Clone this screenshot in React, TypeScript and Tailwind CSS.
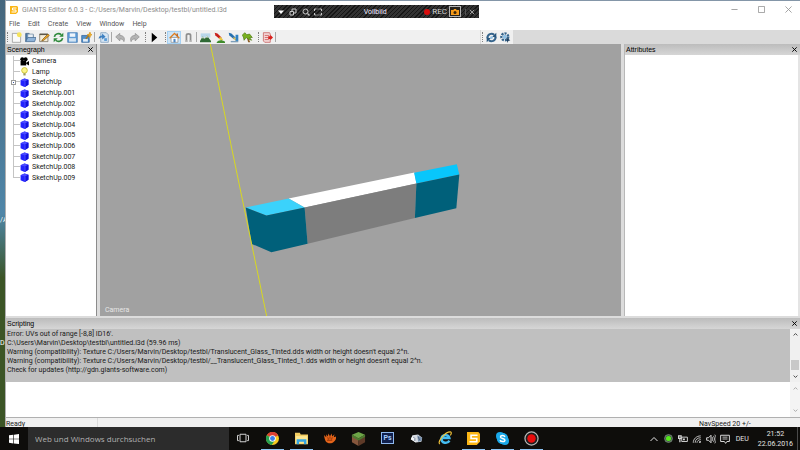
import { ReactNode } from "react";
import clsx from "clsx";

const MENUS = ["File", "Edit", "Create", "View", "Window", "Help"];

const NODES = [
  "Camera",
  "Lamp",
  "SketchUp",
  "SketchUp.001",
  "SketchUp.002",
  "SketchUp.003",
  "SketchUp.004",
  "SketchUp.005",
  "SketchUp.006",
  "SketchUp.007",
  "SketchUp.008",
  "SketchUp.009",
];

const LOG = [
  "Error: UVs out of range [-8,8] ID16'.",
  "C:\\Users\\Marvin\\Desktop\\testbl\\untitled.i3d (59.96 ms)",
  "Warning (compatibility): Texture C:/Users/Marvin/Desktop/testbl/Translucent_Glass_Tinted.dds width or height doesn't equal 2^n.",
  "Warning (compatibility): Texture C:/Users/Marvin/Desktop/testbl/__Translucent_Glass_Tinted_1.dds width or height doesn't equal 2^n.",
  "Check for updates (http://gdn.giants-software.com)",
];

type IconProps = { children: ReactNode; className?: string };

function Icon({ children, className = "size-[11px]" }: IconProps) {
  return (
    <svg viewBox="0 0 16 16" fill="none" className={clsx("shrink-0", className)}>
      {children}
    </svg>
  );
}

function GiantsIcon({ className }: { className?: string }) {
  return (
    <Icon className={className}>
      <path d="M0 0h14l2 2v10l-4 4H0z" fill="#fbb615" />
      <path d="M13 4H5v4h7v4H3" stroke="#fff" strokeWidth="2" />
    </Icon>
  );
}

const newIcon = (
  <Icon>
    <path d="M2 2h9l3 3v10H2z" fill="#fafafa" stroke="#8c8c8c" />
    <circle cx="12" cy="4" r="3.500" fill="#f6e35a" />
  </Icon>
);

const openIcon = (
  <Icon>
    <path d="M1 14V2h5l1 2h5v4" fill="#4d7ba8" stroke="#37597c" />
    <path d="M4 3h8v6H4z" fill="#e8eef4" stroke="#7890a8" />
    <path d="M1 14l3-6h12l-2 6z" fill="#8fb4da" stroke="#3f658c" />
  </Icon>
);

const editIcon = (
  <Icon>
    <path d="M1 3h12v11H1z" fill="#f5edd8" stroke="#6a6250" />
    <path d="M1 2.500h12v2H1z" fill="#5c5648" />
    <path d="M5 11l8-8 2 2-8 7-3 1z" fill="#f0a928" stroke="#7c5516" />
  </Icon>
);

const reloadIcon = (
  <Icon>
    <path d="M2 7c1-5 7-6 10-3M14 9c-1 5-7 6-10 3" stroke="#2f8a3c" strokeWidth="2.500" />
    <path d="M9 7h6V1zM7 9H1v6z" fill="#2f8a3c" />
  </Icon>
);

const saveIcon = (
  <Icon>
    <path d="M1 1h14v14H1z" fill="#5f9cd6" stroke="#3f78b2" />
    <path d="M4 2h8v5H4z" fill="#eef4fa" />
    <path d="M3 9h10v5H3z" fill="#d5e5f3" />
  </Icon>
);

const saveAsIcon = (
  <Icon>
    <path d="M1 5h11v10H1z" fill="#4f8fcc" stroke="#2f5f95" />
    <path d="M3 10h7v4H3z" fill="#e3edf7" />
    <path d="M7 10l6-7" stroke="#b27a18" strokeWidth="2" />
    <path d="M13 0l1 3 2 1-2 1-1 3-1-3-3-1 3-1z" fill="#f2b531" stroke="#d8961c" />
  </Icon>
);

const importIcon = (
  <Icon>
    <path d="M4 1h8l3 3v11H4z" fill="#d6e6f4" stroke="#6f93b5" />
    <path d="M1 10c0-4 2-5 5-5V2l5 5-5 4V8c-2 0-3 1-5 2z" fill="#3c7fc0" />
    <path d="M9 9h4v4H9z" fill="#5a9bd6" />
  </Icon>
);

const undoIcon = (
  <Icon>
    <path d="M1 7l6-5v3c5 0 8 3 6 9-1-3-3-4-6-4v3z" fill="#b4b4b4" stroke="#8f8f8f" />
  </Icon>
);

const redoIcon = (
  <Icon>
    <path d="M15 7L9 2v3C4 5 1 8 3 14c1-3 3-4 6-4v3z" fill="#b4b4b4" stroke="#8f8f8f" />
  </Icon>
);

const playIcon = (
  <Icon>
    <path d="M4 1l8 7-8 7z" fill="#000" />
  </Icon>
);

const homeIcon = (
  <Icon>
    <path d="M3 8h10v7H3z" fill="#fff" stroke="#8a8a8a" />
    <path d="M1 9l7-7 7 7" stroke="#e07b1c" strokeWidth="2" />
    <path d="M11 2h2v4h-2z" fill="#b5642a" />
    <path d="M6.500 10h3v5h-3z" fill="#4d86c4" />
  </Icon>
);

const magnetIcon = (
  <Icon>
    <path d="M5 14V5c0-3 6-3 6 0v9" stroke="#8e8e8e" strokeWidth="2.500" />
    <path d="M3.500 12h3v2.500h-3zM9.500 12h3v2.500h-3z" fill="#b8b8b8" />
  </Icon>
);

const terrainIcon = (
  <Icon>
    <path d="M1 2h14v6H1z" fill="#b9d7ea" />
    <path d="M0 13l4-7 3 4 3-5 6 8v2H0z" fill="#2f6a35" />
    <path d="M4 6l2 3H3zM10 5l2 3H8z" fill="#f4f8f4" />
  </Icon>
);

const paintIcon = (
  <Icon>
    <path d="M1 1l4 1 6 6-2 3-7-6z" fill="#c8201c" />
    <path d="M8 8l4 4" stroke="#e8c63c" strokeWidth="3" />
    <path d="M4 15c2-4 8-4 12-1v2H4z" fill="#3f8c2c" />
  </Icon>
);

const pickIcon = (
  <Icon>
    <path d="M1 1l4 1 6 6-2 3-7-6z" fill="#2670ae" />
    <path d="M8 8l4 4" stroke="#e6c040" strokeWidth="2" />
    <path d="M11 4h4v9h-4z" fill="#2e82c4" />
    <path d="M4 13h11v2H4z" fill="#7c9db8" />
  </Icon>
);

const foliageIcon = (
  <Icon>
    <path d="M7 8h2l3 7H9z" fill="#8a5c22" />
    <path d="M0 5l4-4 3 3 4-1 4 5-4 0 3 4-5-2-3-2-3 4-1-5z" fill="#78b01e" stroke="#4c7a12" />
  </Icon>
);

const scriptIcon = (
  <Icon>
    <path d="M2 1h9l1 2v12H4L2 13z" fill="#f3d6d6" stroke="#c25050" />
    <path d="M4 5h6M4 8h5M4 11h6" stroke="#c94646" />
    <path d="M9 6h3V4l4 4-4 4v-2H9z" fill="#d8201c" />
  </Icon>
);

const syncIcon = (
  <Icon>
    <path d="M2 9c0-6 6-8 10-5M14 7c0 6-6 8-10 5" stroke="#35648c" strokeWidth="3" />
    <path d="M9 7l6 1V1zM7 9l-6-1v7z" fill="#27567e" />
    <circle cx="8" cy="8" r="2" fill="#8fc0e4" />
  </Icon>
);

const gearIcon = (
  <Icon>
    <circle cx="7" cy="7" r="5" stroke="#35648c" strokeWidth="3.500" strokeDasharray="3 1.500" />
    <circle cx="7" cy="7" r="3" fill="#8fc0e4" />
    <path d="M9 8l6 4-3 1-1 3z" fill="#1b3c5c" />
  </Icon>
);

function ToolButton({ label, active, children }: { label: string; active?: boolean; children: ReactNode }) {
  return (
    <button
      type="button"
      aria-label={label}
      className={clsx(
        "flex h-[13px] w-[14px] items-center justify-center",
        active && "bg-[#cce4f7] outline outline-[#a5d0f2] -outline-offset-1"
      )}
    >
      {children}
    </button>
  );
}

function Separator() {
  return <span className="mx-px h-[10px] w-px bg-[#a8a8a8]" />;
}

function ToolGroup({ children }: { children: ReactNode }) {
  return (
    <div className="flex items-center">
      <span className="ml-px h-[10px] w-[2px] border-l border-dotted border-[#808080]" />
      {children}
    </div>
  );
}

function PanelHeader({ title }: { title: string }) {
  return (
    <div className="flex h-[11px] shrink-0 items-center justify-between bg-linear-to-b from-[#bcbcbc] to-[#d6d6d6] pr-[3px] pl-px font-['Liberation_Sans',sans-serif] text-[7px] leading-[11px] text-black">
      <h2>{title}</h2>
      <button type="button" aria-label={`Close ${title}`}>
        <Icon className="size-[5px]">
          <path d="M1 1l14 14M15 1L1 15" stroke="#000" strokeWidth="3" />
        </Icon>
      </button>
    </div>
  );
}

function NodeIcon({ name }: { name: string }) {
  if (name === "Camera") {
    return (
      <Icon className="size-[9px]">
        <path d="M1 7h10v8H1z" fill="#000" />
        <path d="M11 10l5-3v8l-5-3z" fill="#000" />
        <circle cx="4" cy="4" r="3.500" fill="#000" />
        <circle cx="10" cy="4" r="3.500" fill="#000" />
      </Icon>
    );
  }
  if (name === "Lamp") {
    return (
      <Icon className="size-[9px]">
        <circle cx="8" cy="6" r="5" fill="#fbf58a" stroke="#c8bd2a" strokeWidth="1.500" />
        <path d="M6 11h4v4H6z" fill="#9a9a60" />
      </Icon>
    );
  }
  return (
    <Icon className="size-[9px]">
      <path d="M1 4l7-3 7 2v9l-7 4-7-3z" fill="#2222ff" />
      <path d="M1 4l7-3 7 2-6 3z" fill="#4a4aff" />
      <path d="M9 6l6-3v9l-6 4z" fill="#1010dc" />
      <path d="M9 6v9" stroke="#7070ff" />
    </Icon>
  );
}

function TreeNode({ name, last }: { name: string; last: boolean }) {
  return (
    <li className="flex items-center">
      <span className="relative ml-[7px] grid w-[7px] grid-rows-2 self-stretch">
        <span className="border-b border-l border-[#c4c4c4]" />
        <span className={clsx(!last && "border-l border-[#c4c4c4]")} />
        {name === "SketchUp" && (
          <button
            type="button"
            aria-label="Expand"
            className="absolute top-[3px] -left-[2px] flex size-[5px] items-center justify-center bg-white outline outline-[#9a9a9a] -outline-offset-1"
          >
            <span className="size-px bg-[#3c5a9c]" />
          </button>
        )}
      </span>
      <NodeIcon name={name} />
      <span className="ml-[3px]">{name}</span>
    </li>
  );
}

function Chevron({ up, color }: { up?: boolean; color: string }) {
  return (
    <Icon className="size-[5px]">
      <path d={up ? "M2 11l6-6 6 6" : "M2 5l6 6 6-6"} stroke={color} strokeWidth="3" />
    </Icon>
  );
}

function Scene() {
  return (
    <svg viewBox="100 44 522 273" preserveAspectRatio="xMidYMid slice" className="size-full">
      <path d="M289 199L415 173l2 11-112 24z" fill="#fff" />
      <path d="M305 208l112-24-1.500 34.500L308 244.300z" fill="#7d7d7d" />
      <path d="M246 208l43-9 16 9-38.300 8z" fill="#3bd2fb" />
      <path d="M246 208l20.700 8L305 208l3 36.300-36.300 8.700-19.700-8.500z" fill="#00607a" />
      <path d="M414.700 173.300l42.800-8.500L460 175l-43 9z" fill="#08c6fb" />
      <path d="M417 184l43-9-3 33.700-41.500 9.800z" fill="#00607a" />
      <path d="M210.500 44L231 144l21 101 15 72" stroke="#d8d820" fill="none" />
    </svg>
  );
}

function RecorderBar() {
  return (
    <div className="absolute top-1 left-[268px] flex h-[13px] w-[205px] items-center bg-[repeating-linear-gradient(135deg,#161616_0_1px,#323232_1px_3px)] px-1 text-[7px] text-[#d4d4d4]">
      <button type="button" aria-label="Options">
        <Icon className="size-[6px]">
          <path d="M0 4h16l-8 9z" fill="#fff" />
        </Icon>
      </button>
      <button type="button" aria-label="Windows" className="ml-[5px]">
        <Icon className="size-[8px]">
          <path d="M2 7h7v7H2zM6 7V2h8v8H9" stroke="#c8c8c8" strokeWidth="2" />
        </Icon>
      </button>
      <button type="button" aria-label="Zoom" className="ml-[5px]">
        <Icon className="size-[8px]">
          <circle cx="7" cy="7" r="5" stroke="#c8c8c8" strokeWidth="2" />
          <path d="M11 11l4 4" stroke="#c8c8c8" strokeWidth="2.500" />
        </Icon>
      </button>
      <button type="button" aria-label="Area" className="ml-[4px]">
        <Icon className="size-[8px]">
          <path d="M1 6V2h4M11 2h4v4M15 10v4h-4M5 14H1v-4M7 2h2M7 14h2" stroke="#c8c8c8" strokeWidth="2" />
        </Icon>
      </button>
      <span className="flex-1 pl-1 text-center text-[#f0e8ff]">Vollbild</span>
      <button type="button" className="flex items-center gap-0.5">
        <span className="size-[6px] rounded-full bg-[#d80c0c]" />
        <span className="text-[8px]">REC</span>
      </button>
      <button
        type="button"
        aria-label="Snapshot"
        className="ml-[2px] flex h-[11px] w-[12px] items-center justify-center border border-[#b4b4b4] bg-[#26221c]"
      >
        <Icon className="size-[8px]">
          <path d="M0 4h5l1-2h4l1 2h5v10H0z" fill="#f59a1a" />
          <circle cx="8" cy="9" r="3" fill="#3a2408" />
        </Icon>
      </button>
      <button type="button" aria-label="Close recorder" className="ml-[4px] border-l border-[#555] pl-[3px]">
        <Icon className="size-[6px]">
          <path d="M2 2l12 12M14 2L2 14" stroke="#c8c8c8" strokeWidth="2" />
        </Icon>
      </button>
    </div>
  );
}

function TitleBar() {
  return (
    <header className="flex h-[17px] shrink-0 items-center pr-2 pl-1 text-[#8c8c8c]">
      <GiantsIcon className="size-2" />
      <h1 className="ml-1 flex-1">GIANTS Editor 6.0.3 - C:/Users/Marvin/Desktop/testbl/untitled.i3d</h1>
      <div className="flex items-center gap-5">
        <button type="button" aria-label="Minimize">
          <Icon className="size-[7px]">
            <path d="M1 8h14" stroke="#999" strokeWidth="2" />
          </Icon>
        </button>
        <button type="button" aria-label="Maximize">
          <Icon className="size-[7px]">
            <path d="M1 1h14v14H1z" stroke="#999" strokeWidth="2" />
          </Icon>
        </button>
        <button type="button" aria-label="Close">
          <Icon className="size-[7px]">
            <path d="M1 1l14 14M15 1L1 15" stroke="#999" strokeWidth="2" />
          </Icon>
        </button>
      </div>
    </header>
  );
}

function Toolbar() {
  return (
    <div className="flex h-[14px] shrink-0 bg-[#dadada]">
      <div className="flex flex-1 gap-[3px] bg-[#f0f0f0] sm:max-w-[474px]">
        <ToolGroup>
          <ToolButton label="New">{newIcon}</ToolButton>
          <ToolButton label="Open">{openIcon}</ToolButton>
          <ToolButton label="Edit">{editIcon}</ToolButton>
          <ToolButton label="Reload">{reloadIcon}</ToolButton>
          <ToolButton label="Save">{saveIcon}</ToolButton>
          <ToolButton label="Save as">{saveAsIcon}</ToolButton>
          <Separator />
          <ToolButton label="Import">{importIcon}</ToolButton>
          <Separator />
          <ToolButton label="Undo">{undoIcon}</ToolButton>
          <ToolButton label="Redo">{redoIcon}</ToolButton>
        </ToolGroup>
        <ToolGroup>
          <ToolButton label="Play">{playIcon}</ToolButton>
        </ToolGroup>
        <ToolGroup>
          <ToolButton label="Home" active>{homeIcon}</ToolButton>
          <ToolButton label="Snap">{magnetIcon}</ToolButton>
          <Separator />
          <ToolButton label="Terrain">{terrainIcon}</ToolButton>
          <ToolButton label="Paint">{paintIcon}</ToolButton>
          <ToolButton label="Detail">{pickIcon}</ToolButton>
          <ToolButton label="Foliage">{foliageIcon}</ToolButton>
        </ToolGroup>
        <ToolGroup>
          <ToolButton label="Script">{scriptIcon}</ToolButton>
          <Separator />
        </ToolGroup>
      </div>
      <div className="ml-px flex bg-[#f0f0f0] pr-px">
        <ToolGroup>
          <ToolButton label="Sync">{syncIcon}</ToolButton>
          <ToolButton label="Settings">{gearIcon}</ToolButton>
        </ToolGroup>
      </div>
    </div>
  );
}

function ScriptingPanel() {
  return (
    <section className="shrink-0">
      <PanelHeader title="Scripting" />
      <div className="flex h-[53px]">
        <ol className="flex-1 bg-[#c0c0c0] pt-px pl-px leading-[9px] text-[#181818]">
          {LOG.map((line) => (
            <li key={line} className="whitespace-nowrap">
              {line}
            </li>
          ))}
        </ol>
        <div className="flex w-[10px] flex-col items-center bg-[#f0f0f0] py-[3px]">
          <Chevron up color="#404040" />
          <span className="mt-auto mb-1 h-[10px] w-2 bg-[#c8c8c8]" />
          <Chevron color="#404040" />
        </div>
      </div>
      <div className="flex h-[35px] bg-white">
        <textarea aria-label="Script input" className="flex-1 resize-none outline-none" />
        <div className="flex w-[10px] flex-col items-center justify-between bg-[#f4f4f4] py-1">
          <Chevron up color="#a8a8a8" />
          <Chevron color="#a8a8a8" />
        </div>
      </div>
      <footer className="flex h-[10px] overflow-hidden border-t border-[#b0b0b0] bg-[#f0f0f0] leading-[13px] text-[#222]">
        <span className="w-[92px] border-r border-[#dadada]">Ready</span>
        <span className="ml-auto w-[101px]">NavSpeed 20 +/-</span>
      </footer>
    </section>
  );
}

const APPS: { label: string; open?: boolean; icon: ReactNode }[] = [
  {
    label: "Task view",
    icon: (
      <Icon className="size-3">
        <path d="M4 3h8v10H4zM2.500 4.500H.7v7h1.800M13.500 4.500h1.800v7h-1.800" stroke="#d8d8d8" strokeWidth="1.300" />
      </Icon>
    ),
  },
  {
    label: "Chrome",
    open: true,
    icon: (
      <Icon className="size-[13px]">
        <circle cx="8" cy="8" r="8" fill="#f7c920" />
        <path d="M8 8L1 4a8 8 0 0 1 14 0z" fill="#dd4032" />
        <path d="M8 8L1 4a8 8 0 0 0 6 12l4-6z" fill="#25a050" />
        <circle cx="8" cy="8" r="4" fill="#fff" />
        <circle cx="8" cy="8" r="3" fill="#3f7fe8" />
      </Icon>
    ),
  },
  {
    label: "Explorer",
    open: true,
    icon: (
      <Icon className="size-[13px]">
        <path d="M0 1h6l1 2h9v12H0z" fill="#f3cd62" />
        <path d="M1 5h14v9H1z" fill="#fce793" />
        <path d="M2 15V9h12v6h-3v-3H5v3z" fill="#35a5e2" />
      </Icon>
    ),
  },
  {
    label: "Hand",
    icon: (
      <Icon className="size-3">
        <path d="M0 4l3 3V3l2 3 1-4 2 4 2-4 1 4 3-3-1 4 3-1c1 4-3 9-8 9S1 12 0 4z" fill="#e5641a" />
        <path d="M5 7l1 3M8 6v3M11 7l-1 3M4 11h7" stroke="#7a2404" />
      </Icon>
    ),
  },
  {
    label: "Minecraft",
    icon: (
      <Icon className="size-[15px]">
        <path d="M1 4l7-3 7 3-7 4z" fill="#6da548" />
        <path d="M1 4l7 4v8l-7-4z" fill="#86573d" />
        <path d="M15 4L8 8v8l7-4z" fill="#5e3a28" />
        <path d="M1 4l7 4 7-4v2L8 10 1 6z" fill="#4a7d30" />
      </Icon>
    ),
  },
  {
    label: "Photoshop",
    icon: (
      <span className="flex h-3 w-[13px] items-center justify-center border border-[#8fb8ee] bg-[#10204e] text-[7px] font-bold leading-none text-[#a6ccfb]">
        Ps
      </span>
    ),
  },
  {
    label: "Cube",
    icon: (
      <Icon className="size-[13px]">
        <path d="M3 4l7-1 5 4-1 5-7 1-6-4z" fill="#d6dbe2" />
        <path d="M9 4l1 8 4-1 1-4z" fill="#7990ac" />
        <path d="M3 5l4 3v5l-6-4z" fill="#f2f4f6" />
        <path d="M4 6l2 2v3M10 6l2 4" stroke="#4a5a78" />
      </Icon>
    ),
  },
  {
    label: "Internet Explorer",
    icon: (
      <Icon className="size-[14px]">
        <path d="M13 11c-2 4-9 3-9-2s8-6 9-1H5" stroke="#45bdf2" strokeWidth="2.800" />
        <path d="M2 15C-1 12 8 1 14 1c2 0 1 3 0 4" stroke="#f3c43a" strokeWidth="1.300" />
      </Icon>
    ),
  },
  { label: "GIANTS Editor", open: true, icon: <GiantsIcon className="size-[13px]" /> },
  {
    label: "Skype",
    open: true,
    icon: (
      <Icon className="size-[13px]">
        <circle cx="5" cy="5" r="5" fill="#1aa9ea" />
        <circle cx="11" cy="11" r="5" fill="#1aa9ea" />
        <circle cx="8" cy="8" r="7" fill="#1aa9ea" />
        <path d="M11 6C10 3.500 5.500 4 5.500 6S11 8 11 10s-5 2.500-6 0" stroke="#fff" strokeWidth="1.800" />
      </Icon>
    ),
  },
  {
    label: "Recorder",
    open: true,
    icon: (
      <Icon className="size-[15px]">
        <circle cx="8" cy="8" r="7" fill="#1e1e1e" stroke="#b8b8b8" strokeWidth="1.300" />
        <circle cx="8" cy="8" r="4.500" fill="#e80c0c" />
      </Icon>
    ),
  },
];

function Tray() {
  return (
    <div className="ml-auto flex items-center text-[#e4e4e4]">
      <div className="flex items-center gap-1">
        <Icon className="size-2">
          <path d="M1 12l7-7 7 7" stroke="#e4e4e4" strokeWidth="2" />
        </Icon>
        <Icon className="ml-[2px] size-[9px]">
          <circle cx="8" cy="8" r="7" fill="#44544a" stroke="#9ab09a" />
          <circle cx="8" cy="8" r="4.500" fill="#55ea1a" />
        </Icon>
        <Icon className="ml-px size-[10px]">
          <path d="M6 5h9v7H6z" stroke="#d8d8d8" strokeWidth="1.500" />
          <path d="M8 7h3v3H8z" fill="#d8d8d8" />
          <path d="M1 3h4v4H1zM3 7v6" stroke="#d8d8d8" strokeWidth="2" />
        </Icon>
        <Icon className="size-[10px]">
          <path d="M2 14C2 8 7 3 14 3M5 14c0-5 4-8 9-8M8 14c0-3 3-5 6-5" stroke="#c8c8c8" strokeWidth="1.500" />
          <path d="M11 14c0-2 1-3 3-3v3z" fill="#e4e4e4" />
        </Icon>
        <Icon className="size-[10px]">
          <path d="M1 6h3l4-4v12l-4-4H1z" stroke="#e4e4e4" strokeWidth="1.500" />
          <path d="M10 5q2 3 0 6M12 3q4 5 0 10M14 1q5 7 0 14" stroke="#e4e4e4" strokeWidth="1.200" />
        </Icon>
        <Icon className="size-[10px]">
          <path d="M1 2h14v10h-4l-2 3-2-3H1z" stroke="#e4e4e4" strokeWidth="1.500" />
          <path d="M4 5h8M4 8h8" stroke="#e4e4e4" strokeWidth="1.300" />
        </Icon>
      </div>
      <span className="ml-[6px]">DEU</span>
      <time className="ml-[9px] text-center leading-[10px]">
        21:52
        <br />
        22.06.2016
      </time>
      <span className="mr-[2px] ml-[4px] h-full w-px bg-[#4a4a4a]" />
    </div>
  );
}

function Taskbar() {
  return (
    <nav className="flex h-[23px] shrink-0 bg-[#0e0d0b] text-[7px]">
      <button type="button" aria-label="Start" className="flex w-7 items-center justify-center">
        <Icon className="size-[10px]">
          <path d="M0 2l7-1v6.500H0zM8 1l8-1v7.500H8zM0 8.500h7V15l-7-1zM8 8.500h8V16l-8-1z" fill="#fff" />
        </Icon>
      </button>
      <input
        type="search"
        aria-label="Suche"
        placeholder="Web und Windows durchsuchen"
        className="w-[201px] bg-[#2c2c2c] pl-[7px] font-['Open_Sans',sans-serif] text-[8px] outline-none placeholder:text-[#b0b0b0]"
      />
      <ul className="grid w-[317px] grid-cols-11">
        {APPS.map(({ label, open, icon }) => (
          <li key={label} className="flex justify-center">
            <button
              type="button"
              aria-label={label}
              className={clsx(
                "flex h-full w-[23px] items-center justify-center border-b",
                open ? "border-[#8cc4f4]" : "border-transparent"
              )}
            >
              {icon}
            </button>
          </li>
        ))}
      </ul>
      <Tray />
    </nav>
  );
}

export default function App() {
  return (
    <div className="flex h-screen flex-col overflow-hidden font-['Roboto',sans-serif] text-[7px] leading-[10px]">
      <div className="flex min-h-0 flex-1">
        <div className="flex w-[5px] shrink-0 flex-col overflow-hidden bg-linear-to-b from-[#46667c] via-[#4f86a8] via-50% to-[#3c5526] to-65% text-white">
          <span className="mt-[215px]">/A</span>
          <span className="mt-[113px]">D</span>
        </div>
        <div className="relative flex min-w-0 flex-1 flex-col border-t border-l border-t-[#8496a8] border-l-[#b0b0b0] bg-white">
          <TitleBar />
          <RecorderBar />
          <nav className="flex h-3 shrink-0 items-center gap-[8px] pl-[3px] text-[#555]">
            {MENUS.map((menu) => (
              <button type="button" key={menu}>
                {menu}
              </button>
            ))}
          </nav>
          <Toolbar />
          <main className="flex min-h-0 flex-1 gap-[3px] border-b-2 border-[#dcdcdc] bg-[#dcdcdc]">
            <section className="flex w-[91px] shrink-0 flex-col border-r border-[#8c8c8c] bg-white">
              <PanelHeader title="Scenegraph" />
              <ul className="mt-px grid h-[127px] grid-rows-12 text-[#181818]">
                {NODES.map((name, i) => (
                  <TreeNode key={name} name={name} last={i === NODES.length - 1} />
                ))}
              </ul>
            </section>
            <section className="relative min-w-0 flex-1 bg-[#a1a1a1]">
              <Scene />
              <span className="absolute bottom-px left-[5px] text-[#e6e6e6]">Camera</span>
            </section>
            <section className="flex w-[176px] shrink-0 flex-col border-l border-[#b8b8b8] bg-white">
              <PanelHeader title="Attributes" />
              <div className="flex-1 border-r-2 border-[#e4e4e4]" />
            </section>
          </main>
          <ScriptingPanel />
        </div>
      </div>
      <Taskbar />
    </div>
  );
}
